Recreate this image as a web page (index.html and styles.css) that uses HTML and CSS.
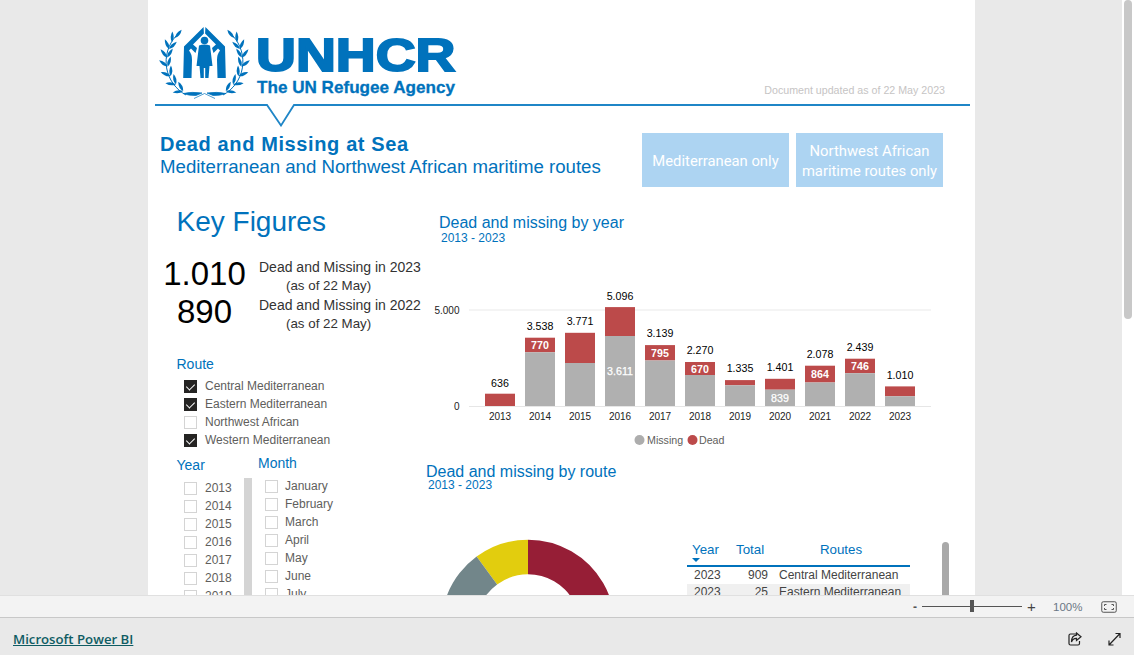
FILE: index.html
```html
<!DOCTYPE html>
<html lang="en">
<head>
  <meta charset="UTF-8">
  <title>Dead and Missing at Sea</title>
  <link rel="stylesheet" href="styles.css">
</head>
<body>
  <main class="viewer">
    <div class="stage">
      <section class="canvas">
        <header class="brand">
          <svg class="logo" viewBox="155 20 305 84" width="305" height="84">
            <defs>
              <path id="leaf" d="M0 0Q4-3.600 10.500-1.500Q5.500 2.400 0 0Z"/>
              <g id="wreath">
                <path d="M186 95A38 38 0 0 1 176 36" fill="none" stroke="#0072bc" stroke-width="1"/>
                <use href="#leaf" transform="translate(183.2 91.1) rotate(180)"/>
                <use href="#leaf" transform="translate(183.2 91.1) rotate(250)"/>
                <use href="#leaf" transform="translate(175.9 84.4) rotate(195)"/>
                <use href="#leaf" transform="translate(175.9 84.4) rotate(265)"/>
                <use href="#leaf" transform="translate(170.6 76.1) rotate(210)"/>
                <use href="#leaf" transform="translate(170.6 76.1) rotate(280)"/>
                <use href="#leaf" transform="translate(167.6 66.6) rotate(225)"/>
                <use href="#leaf" transform="translate(167.6 66.6) rotate(295)"/>
                <use href="#leaf" transform="translate(167.1 57.5) rotate(240)"/>
                <use href="#leaf" transform="translate(167.1 57.5) rotate(310)"/>
                <use href="#leaf" transform="translate(169 49) rotate(255)"/>
                <use href="#leaf" transform="translate(169 49) rotate(325)"/>
                <use href="#leaf" transform="translate(172 42) rotate(280)"/>
                <use href="#leaf" transform="translate(175 38) rotate(317)"/>
                <path d="M183 93.500Q192 91.500 202 93L196 95.500Q190 96 183 93.500ZM194 98.500L204.500 93.500" stroke="#0072bc" stroke-width=".7"/>
              </g>
              <path id="hand" d="M203.600 27 184 46.500 183.200 78H191.500L192 60Q192 54 189 50.500L191 48.500 195.500 53 197 48 193 44.500 203.900 33.500Z"/>
            </defs>
            <g class="emblem">
              <use href="#wreath"/>
              <use href="#wreath" transform="translate(409 0) scale(-1 1)"/>
              <use href="#hand"/>
              <use href="#hand" transform="translate(409 0) scale(-1 1)"/>
              <circle cx="204.500" cy="40.500" r="3.800"/>
              <path d="M199 45.500Q204.500 43.500 210 45.500L212.500 66H209.500L208.500 78H205.200V68H203.800V78H200.500L199.500 66H196.500Z"/>
            </g>
            <text class="logo-name" x="256" y="71" textLength="199.500" lengthAdjust="spacingAndGlyphs">UNHCR</text>
            <text class="logo-tag" x="257" y="93" textLength="198" lengthAdjust="spacingAndGlyphs">The UN Refugee Agency</text>
          </svg>
          <div class="stamp">Document updated as of 22 May 2023</div>
        </header>
        <svg class="rule" viewBox="155 104 815 23" width="815" height="23">
          <polyline points="155,105 267,105 281,125.500 294,105 970,105"/>
        </svg>

        <div class="title-row">
          <div class="titles">
            <h1>Dead and Missing at Sea</h1>
            <h2>Mediterranean and Northwest African maritime routes</h2>
          </div>
          <div class="buttons">
            <div class="btn">Mediterranean only</div>
            <div class="btn">Northwest African<br>maritime routes only</div>
          </div>
        </div>

        <div class="columns">
          <aside class="left">
            <div class="key-title">Key Figures</div>
            <div class="stat">
              <div class="stat-num">1.010</div>
              <div class="stat-text">Dead and Missing in 2023<br><span class="stat-note">(as of 22 May)</span></div>
            </div>
            <div class="stat">
              <div class="stat-num">890</div>
              <div class="stat-text">Dead and Missing in 2022<br><span class="stat-note">(as of 22 May)</span></div>
            </div>

            <div class="slicer-label route-label">Route</div>
            <ul class="slicer">
              <li><span class="box on"></span>Central Mediterranean</li>
              <li><span class="box on"></span>Eastern Mediterranean</li>
              <li><span class="box"></span>Northwest African</li>
              <li><span class="box on"></span>Western Mediterranean</li>
            </ul>

            <div class="filters">
              <div class="filter-year">
                <div class="slicer-label">Year</div>
                <div class="year-body">
                  <ul class="slicer">
                    <li><span class="box"></span>2013</li>
                    <li><span class="box"></span>2014</li>
                    <li><span class="box"></span>2015</li>
                    <li><span class="box"></span>2016</li>
                    <li><span class="box"></span>2017</li>
                    <li><span class="box"></span>2018</li>
                    <li><span class="box"></span>2019</li>
                  </ul>
                  <div class="year-scroll"></div>
                </div>
              </div>
              <div class="filter-month">
                <div class="slicer-label">Month</div>
                <ul class="slicer">
                  <li><span class="box"></span>January</li>
                  <li><span class="box"></span>February</li>
                  <li><span class="box"></span>March</li>
                  <li><span class="box"></span>April</li>
                  <li><span class="box"></span>May</li>
                  <li><span class="box"></span>June</li>
                  <li><span class="box"></span>July</li>
                </ul>
              </div>
            </div>
          </aside>

          <div class="right">
            <div class="chart-title">Dead and missing by year</div>
            <div class="chart-sub">2013 - 2023</div>
            <svg class="bars" viewBox="425 250 545 200" width="545" height="200">
              <line class="grid" x1="469" y1="310" x2="931" y2="310"/>
              <line class="base" x1="469" y1="406.500" x2="931" y2="406.500"/>
              <text class="axis" x="459.500" y="313.500" text-anchor="end">5.000</text>
              <text class="axis" x="459.500" y="410" text-anchor="end">0</text>

              <g class="dead">
                <rect x="485" y="393.700" width="30" height="12.300"/>
                <rect x="525" y="337.700" width="30" height="14.600"/>
                <rect x="565" y="332.800" width="30" height="30.200"/>
                <rect x="605" y="307.100" width="30" height="28.900"/>
                <rect x="645" y="345.100" width="30" height="15.400"/>
                <rect x="685" y="362" width="30" height="13"/>
                <rect x="725" y="380.100" width="30" height="5.200"/>
                <rect x="765" y="378.800" width="30" height="10.900"/>
                <rect x="805" y="365.700" width="30" height="16.800"/>
                <rect x="845" y="358.700" width="30" height="14.500"/>
                <rect x="885" y="386.400" width="30" height="9.900"/>
              </g>
              <g class="missing">
                <rect x="525" y="352.300" width="30" height="53.700"/>
                <rect x="565" y="363" width="30" height="43"/>
                <rect x="605" y="336" width="30" height="70"/>
                <rect x="645" y="360.500" width="30" height="45.500"/>
                <rect x="685" y="375" width="30" height="31"/>
                <rect x="725" y="385.300" width="30" height="20.700"/>
                <rect x="765" y="389.700" width="30" height="16.300"/>
                <rect x="805" y="382.500" width="30" height="23.500"/>
                <rect x="845" y="373.200" width="30" height="32.800"/>
                <rect x="885" y="396.300" width="30" height="9.700"/>
              </g>

              <g class="totals">
                <text x="500" y="387">636</text>
                <text x="540" y="330">3.538</text>
                <text x="580" y="325">3.771</text>
                <text x="620" y="300">5.096</text>
                <text x="660" y="337">3.139</text>
                <text x="700" y="354">2.270</text>
                <text x="740" y="372">1.335</text>
                <text x="780" y="371">1.401</text>
                <text x="820" y="358">2.078</text>
                <text x="860" y="351">2.439</text>
                <text x="900" y="379">1.010</text>
              </g>
              <g class="inner">
                <text x="540" y="349">770</text>
                <text x="660" y="357">795</text>
                <text x="700" y="373">670</text>
                <text x="820" y="378">864</text>
                <text x="860" y="370">746</text>
              </g>
              <g class="inner light">
                <text x="620" y="375">3.611</text>
                <text x="780" y="402">839</text>
              </g>
              <g class="years">
                <text x="500" y="420">2013</text>
                <text x="540" y="420">2014</text>
                <text x="580" y="420">2015</text>
                <text x="620" y="420">2016</text>
                <text x="660" y="420">2017</text>
                <text x="700" y="420">2018</text>
                <text x="740" y="420">2019</text>
                <text x="780" y="420">2020</text>
                <text x="820" y="420">2021</text>
                <text x="860" y="420">2022</text>
                <text x="900" y="420">2023</text>
              </g>
              <circle cx="639.500" cy="440" r="5" fill="#adadad"/>
              <text class="legend" x="647" y="444">Missing</text>
              <circle cx="692.500" cy="440" r="5" fill="#bc4a4a"/>
              <text class="legend" x="699" y="444">Dead</text>
            </svg>

            <div class="chart-title route-title">Dead and missing by route</div>
            <div class="chart-sub route-sub">2013 - 2023</div>

            <div class="route-row">
              <svg class="donut" viewBox="425 492 255 200" width="255" height="200">
                <path d="M528 539.700A86.800 86.800 0 0 1 603.200 669.900L573.200 652.600A52.200 52.200 0 0 0 528 574.300Z" fill="#961e36"/>
                <path d="M476.600 556.500A86.800 86.800 0 0 1 528 539.700V574.300A52.200 52.200 0 0 0 497.100 584.400Z" fill="#e2cd0e"/>
                <path d="M442.500 641.600A86.800 86.800 0 0 1 476.600 556.500L497.100 584.400A52.200 52.200 0 0 0 476.600 635.600Z" fill="#72868a"/>
              </svg>
              <table class="routes">
                <thead>
                  <tr><th class="col-year">Year<span class="sort"></span></th><th class="col-total">Total</th><th class="col-route">Routes</th></tr>
                </thead>
                <tbody>
                  <tr><td>2023</td><td class="num">909</td><td>Central Mediterranean</td></tr>
                  <tr class="alt"><td>2023</td><td class="num">25</td><td>Eastern Mediterranean</td></tr>
                </tbody>
              </table>
              <div class="table-scroll"></div>
            </div>
          </div>
        </div>
      </section>
    </div>
    <div class="page-scroll"><div class="page-thumb"></div></div>
  </main>

  <div class="zoom-bar">
    <span class="zoom-minus">-</span>
    <div class="slider"><span class="slider-knob"></span></div>
    <span class="zoom-plus">+</span>
    <span class="zoom-value">100%</span>
    <svg class="fit" viewBox="0 0 16 12" width="16" height="12">
      <rect x=".75" y=".75" width="14.500" height="10.500" rx="1.500"/>
      <path d="M3.500 5V3.500H5.500M12.500 5V3.500H10.500M3.500 7V8.500H5.500M12.500 7V8.500H10.500"/>
    </svg>
  </div>

  <footer class="footer">
    <a class="pbi-link" href="#">Microsoft Power BI</a>
    <div class="footer-icons">
      <svg viewBox="0 0 14 14" width="14" height="14">
        <path d="M9 2H2.500Q1 2 1 3.500V11.500Q1 13 2.500 13H10Q11.500 13 11.500 11.500V9"/>
        <path d="M8.500 1 13 4.800 8.500 8.500V6.400Q5 6.200 3.500 10 3.500 3.600 8.500 3.200Z"/>
      </svg>
      <svg viewBox="0 0 13 14" width="13" height="14">
        <path d="M1 13 12 1.500M7.500 1.500H12V6M1 8.500V13H5.500"/>
      </svg>
    </div>
  </footer>
</body>
</html>
```

FILE: styles.css
```css
* {
  box-sizing: border-box;
}

body {
  margin: 0;
  height: 100vh;
  display: flex;
  flex-direction: column;
  overflow: hidden;
  background-color: #e9e9e9;
  font-family: 'Liberation Sans', Arial, sans-serif;
  color: #333;
}

/* report area */
.viewer {
  height: 595px;
  display: flex;
  overflow: hidden;
}

.stage {
  flex: 1;
  padding-left: 148px;
  overflow: hidden;
}

.page-scroll {
  width: 12px;
  padding-left: 2px;
  background-color: #fff;
}

.page-thumb {
  width: 8px;
  height: 319px;
  border-radius: 4px;
  background-color: #c8c8c8;
}

.canvas {
  width: 827px;
  height: 900px;
  background-color: #fff;
}

/* header */
.brand {
  height: 104px;
  padding: 20px 30px 0 7px;
  display: flex;
  justify-content: space-between;
}

.logo {
  display: block;
}

.emblem {
  fill: #0072bc;
}

#leaf, #hand {
  fill: #0072bc;
}

.logo-name {
  font-size: 47px;
  font-weight: bold;
  fill: #0072bc;
  stroke: #0072bc;
  stroke-width: 2px;
}

.logo-tag {
  font-size: 17px;
  font-weight: bold;
  fill: #0072bc;
  stroke: #0072bc;
  stroke-width: .3px;
}

.stamp {
  margin-top: 64px;
  font-size: 10.67px;
  line-height: 13px;
  height: 13px;
  color: #c6c4c4;
}

.rule {
  display: block;
  margin-left: 7px;
}

.rule polyline {
  fill: none;
  stroke: #1f86c7;
  stroke-width: 1.8;
}

.title-row {
  margin-top: 6px;
  padding: 0 32px 0 12px;
  display: flex;
  justify-content: space-between;
}

.titles h1 {
  margin: 0;
  font-size: 20px;
  line-height: 22px;
  font-weight: bold;
  letter-spacing: .62px;
  color: #0072bc;
}

.titles h2 {
  margin: 0;
  font-size: 18.67px;
  line-height: 24px;
  font-weight: normal;
  letter-spacing: -.02px;
  color: #0072bc;
}

.buttons {
  display: flex;
  gap: 7px;
}

.btn {
  width: 147px;
  height: 54px;
  padding-top: 2px;
  display: flex;
  align-items: center;
  justify-content: center;
  text-align: center;
  background-color: #add4f2;
  color: #fff;
  font-family: Roboto, sans-serif;
  font-size: 14.8px;
  line-height: 20px;
}

/* columns */
.columns {
  display: flex;
}

.left {
  width: 277px;
}

.key-title {
  margin: 19px 0 20px 28.500px;
  font-size: 28px;
  line-height: 32px;
  color: #0072bc;
}

.stat {
  height: 36px;
  margin-bottom: 2px;
  display: flex;
}

.stat-num {
  width: 111px;
  padding-left: 2px;
  text-align: center;
  font-size: 33px;
  line-height: 32px;
  color: #000;
}

.stat-text {
  font-size: 14px;
  line-height: 18px;
  white-space: nowrap;
}

.stat-note {
  margin-left: 27px;
  font-size: 13.33px;
}

.slicer-label {
  font-size: 14px;
  line-height: 16px;
  color: #0072bc;
}

.route-label {
  margin: 24px 0 5px 28.500px;
}

.slicer {
  margin: 0;
  padding: 0;
  list-style: none;
}

.slicer li {
  height: 18px;
  display: flex;
  align-items: center;
  font-size: 12px;
  color: #605e5c;
  white-space: nowrap;
}

.box {
  width: 13px;
  height: 13px;
  margin-right: 8px;
  border: 1px solid #d4d4d4;
  position: relative;
  flex: none;
}

.box.on {
  background-color: #252423;
  border-color: #252423;
}

.box.on::after {
  content: "";
  position: absolute;
  left: 3px;
  top: 1px;
  width: 4px;
  height: 7px;
  border: solid #fff;
  border-width: 0 1.5px 1.5px 0;
  transform: rotate(45deg);
}

.left > .slicer {
  padding-left: 36px;
}

.filters {
  margin-top: 6px;
  display: flex;
}

.filter-year {
  width: 110px;
  padding: 2px 0 0 28px;
}

.filter-year .slicer-label {
  padding-left: .5px;
}

.year-body {
  display: flex;
  margin-top: 5px;
}

.year-body .slicer {
  width: 68px;
  padding-left: 8px;
  margin-top: 1px;
}

.year-scroll {
  width: 8px;
  height: 130px;
  background-color: #d4d4d4;
}

.filter-month .slicer {
  margin-top: 6px;
  padding-left: 7px;
}

.filter-month .box {
  margin-right: 7px;
}

/* charts */
.right {
  flex: 1;
}

.chart-title {
  margin: 27px 0 0 14px;
  font-size: 16px;
  line-height: 17px;
  color: #0072bc;
}

.chart-sub {
  margin-left: 16px;
  font-size: 12px;
  line-height: 14px;
  color: #0072bc;
}

.route-title {
  margin: 13px 0 0 1px;
}

.route-sub {
  margin: -2px 0 0 3px;
}

.bars {
  display: block;
  margin-top: 5px;
}

.bars .grid {
  stroke: #f1f1f1;
  stroke-width: 1.5;
}

.bars .base {
  stroke: #e6e6e6;
  stroke-width: 1;
}

.axis, .years text {
  font-size: 10px;
  fill: #222;
}

.years, .totals, .inner {
  text-anchor: middle;
}

.dead {
  fill: #bc4a4a;
}

.missing {
  fill: #b0b0b0;
}

.totals text {
  font-size: 10.67px;
  fill: #000;
}

.inner text {
  font-size: 10.67px;
  font-weight: bold;
  fill: #fff;
}

.inner.light text {
  font-weight: normal;
  stroke: #fff;
  stroke-width: .25px;
}

.legend {
  font-size: 10.67px;
  fill: #605e5c;
}

.route-row {
  display: flex;
}

.donut {
  display: block;
  flex: none;
}

.routes {
  width: 223px;
  height: 60px;
  margin: 49px 0 0 7px;
  border-collapse: collapse;
  table-layout: fixed;
  font-size: 12px;
  align-self: flex-start;
}

.routes th {
  height: 25px;
  padding: 1px 0 7px;
  font-size: 13.33px;
  line-height: 16px;
  font-weight: normal;
  color: #0072bc;
  border-bottom: 2px solid #0072bc;
  position: relative;
}

.routes .col-year {
  width: 46px;
  padding-left: 5px;
  text-align: left;
}

.routes .col-total {
  width: 39px;
  padding-left: 3px;
  text-align: left;
}

.routes td {
  height: 17px;
  padding: 0 0 0 7px;
  line-height: 17px;
  color: #444;
  white-space: nowrap;
}

.routes td.num {
  padding: 0 4px 0 0;
  text-align: right;
}

.routes .alt td {
  background-color: #f0f0f0;
}

.sort {
  position: absolute;
  left: 5px;
  bottom: 3px;
  border-left: 4px solid transparent;
  border-right: 4px solid transparent;
  border-top: 4px solid #0072bc;
}

.table-scroll {
  width: 7px;
  height: 90px;
  margin: 50px 0 0 32px;
  border-radius: 4px;
  background-color: #a9a9a9;
  flex: none;
}

/* bottom bars */
.zoom-bar {
  height: 23px;
  padding-left: 913px;
  display: flex;
  align-items: center;
  background-color: #f3f3f3;
  border-top: 1px solid #e0e0e0;
  border-bottom: 1px solid #c8c8c8;
  color: #6b7785;
  font-size: 11.5px;
}

.zoom-minus {
  width: 9px;
  font-size: 12px;
  font-weight: bold;
  color: #555;
}

.slider {
  width: 100px;
  height: 1px;
  background-color: #555;
  position: relative;
}

.slider-knob {
  position: absolute;
  left: 48px;
  top: -6px;
  width: 4px;
  height: 12px;
  background-color: #555;
}

.zoom-plus {
  width: 31px;
  padding-left: 5px;
  font-size: 15px;
  color: #444;
}

.zoom-value {
  width: 48px;
}

.fit {
  fill: none;
  stroke: #555;
  stroke-width: 1;
}

.footer {
  height: 37px;
  padding: 5px 13px 0;
  display: flex;
  justify-content: space-between;
  align-items: center;
}

.pbi-link {
  font-family: 'Open Sans', sans-serif;
  font-size: 13.2px;
  font-weight: 600;
  color: #0f5c63;
}

.footer-icons {
  display: flex;
  gap: 26px;
}

.footer-icons svg {
  display: block;
  fill: none;
  stroke: #222;
  stroke-width: 1.2;
}
```
